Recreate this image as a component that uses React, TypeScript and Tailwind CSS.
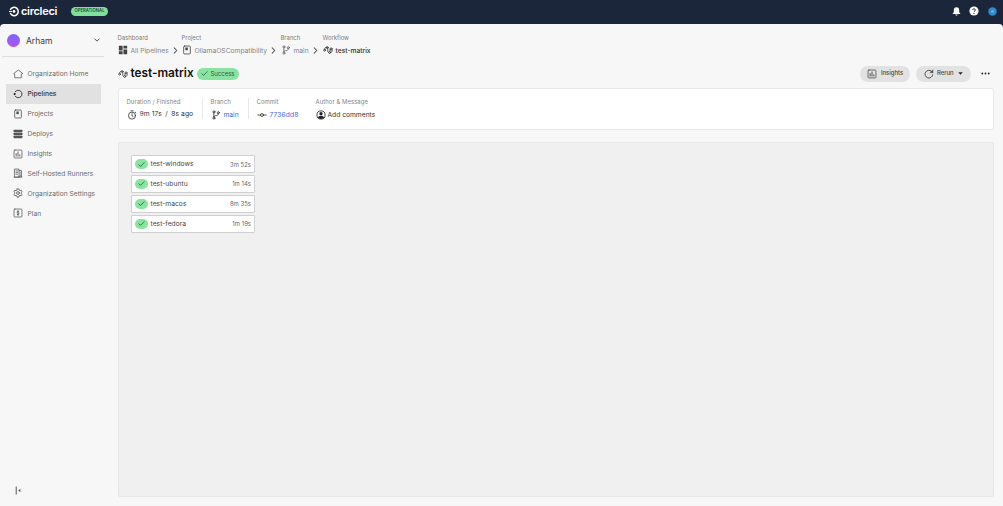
import React from 'react';
import clsx from 'clsx';

type IconProps = { className?: string };

const stroke = {
  fill: 'none',
  stroke: 'currentColor',
  strokeWidth: 1.8,
  strokeLinecap: 'round' as const,
  strokeLinejoin: 'round' as const,
};

function HomeIcon({ className }: IconProps) {
  return (
    <svg viewBox="0 0 24 24" className={className} {...stroke}>
      <path d="M12 3 1.500 11l2.500 1v9h16v-9l2.500-1z" />
    </svg>
  );
}

function PipelinesIcon({ className }: IconProps) {
  return (
    <svg viewBox="0 0 24 24" className={className} {...stroke} strokeWidth={2}>
      <path d="M5 7a9 9 0 1 1 0 10" />
      <circle cx="4" cy="12" r="2.600" fill="currentColor" stroke="none" />
    </svg>
  );
}

function ProjectIcon({ className }: IconProps) {
  return (
    <svg viewBox="0 0 24 24" className={className} {...stroke} strokeWidth={2}>
      <rect x="4" y="2.500" width="16" height="19" rx="2" />
      <rect x="8" y="6" width="6" height="6.500" fill="currentColor" stroke="none" />
    </svg>
  );
}

function DeploysIcon({ className }: IconProps) {
  return (
    <svg viewBox="0 0 24 24" className={className} fill="currentColor">
      <rect x="1.500" y="2" width="21" height="5.500" rx="1" />
      <rect x="1.500" y="9.200" width="21" height="5.500" rx="1" />
      <rect x="1.500" y="16.400" width="21" height="5.500" rx="1" />
    </svg>
  );
}

function InsightsIcon({ className }: IconProps) {
  return (
    <svg viewBox="0 0 24 24" className={className} {...stroke}>
      <rect x="2.500" y="2.500" width="19" height="19" rx="2" />
      <path d="M7.500 11v6M12 7v10M16.500 14v3" strokeWidth={2.2} />
    </svg>
  );
}

function RunnersIcon({ className }: IconProps) {
  return (
    <svg viewBox="0 0 24 24" className={className} {...stroke}>
      <path d="M3.500 21.500v-19h11v19zM14.500 6h6v15.500h-6M2.500 21.500h19" />
      <path d="M7 7h4M7 11h4M7 15h4M17.500 10v1M17.500 14v1M17.500 18v.5" />
    </svg>
  );
}

function GearIcon({ className }: IconProps) {
  return (
    <svg viewBox="0 0 24 24" className={className} {...stroke} strokeWidth={2}>
      <path d="M10 2h4l.7 3 2.200 1.300 3-.9 2 3.400-2.300 2.100v2.200l2.300 2.100-2 3.400-3-.9-2.200 1.300-.7 3h-4l-.7-3-2.200-1.300-3 .9-2-3.400 2.300-2.100v-2.200L2.100 8.800l2-3.400 3 .9L9.300 5z" />
      <circle cx="12" cy="12" r="3.400" />
    </svg>
  );
}

function PlanIcon({ className }: IconProps) {
  return (
    <svg viewBox="0 0 24 24" className={className} {...stroke}>
      <rect x="2.500" y="2.500" width="19" height="19" rx="2" />
      <path d="M14.800 9c-1-1.600-5.300-1.500-5.300.8 0 2.700 5.300 1.600 5.300 4.400 0 2.300-4.600 2.400-5.600.6M12 6v12" />
    </svg>
  );
}

function DashboardIcon({ className }: IconProps) {
  return (
    <svg viewBox="0 0 24 24" className={className} fill="currentColor">
      <path d="M2 2h9v11H2zM13 2h9v6.500h-9zM2 15h9v7H2zM13 10.500h9V22h-9z" />
    </svg>
  );
}

function BranchIcon({ className }: IconProps) {
  return (
    <svg viewBox="0 0 24 24" className={className} {...stroke} strokeWidth={2}>
      <circle cx="7" cy="4.500" r="2.500" />
      <circle cx="7" cy="19.500" r="2.500" />
      <circle cx="17.500" cy="6.500" r="2.500" />
      <path d="M7 7v10M17.500 9c0 4-3 4.500-6 4.500-2.500 0-4.500 1-4.500 3" />
    </svg>
  );
}

function WorkflowIcon({ className }: IconProps) {
  return (
    <svg viewBox="0 0 24 24" className={className} {...stroke} strokeWidth={2}>
      <path d="M4 10.500c0-3.500 1.500-5 4-5M11.500 8v6c0 2.500.5 3.500 2 4M18.500 18.500c2.500-1 3.500-3 3.500-6M17 10v5" />
      <circle cx="10" cy="6" r="2.200" />
      <circle cx="3.800" cy="12.500" r="2.200" />
      <circle cx="19.500" cy="9.500" r="2.400" />
      <circle cx="16" cy="18" r="2.200" />
    </svg>
  );
}

function ChevronIcon({ className }: IconProps) {
  return (
    <svg viewBox="0 0 8 8" className={className} {...stroke} strokeWidth={1.2}>
      <path d="m2.500 1 3 3-3 3" />
    </svg>
  );
}

function CheckIcon({ className }: IconProps) {
  return (
    <svg viewBox="0 0 8 8" className={className} {...stroke} strokeWidth={0.9}>
      <path d="m1 4.300 1.900 1.900L7 1.900" />
    </svg>
  );
}

const navItems = [
  { label: 'Organization Home', icon: HomeIcon },
  { label: 'Pipelines', icon: PipelinesIcon, active: true },
  { label: 'Projects', icon: ProjectIcon },
  { label: 'Deploys', icon: DeploysIcon },
  { label: 'Insights', icon: InsightsIcon },
  { label: 'Self-Hosted Runners', icon: RunnersIcon },
  { label: 'Organization Settings', icon: GearIcon },
  { label: 'Plan', icon: PlanIcon },
];

const crumbs = [
  { title: 'Dashboard', label: 'All Pipelines', icon: DashboardIcon, width: 'w-[64px]', iconColor: 'text-[#444]' },
  { title: 'Project', label: 'OllamaOSCompatibility', icon: ProjectIcon, width: 'w-[99px]', iconColor: 'text-[#444]' },
  { title: 'Branch', label: 'main', icon: BranchIcon, width: 'w-[42px]', iconColor: 'text-[#666]' },
  { title: 'Workflow', label: 'test-matrix', icon: WorkflowIcon, width: 'w-[60px]', iconColor: 'text-[#333]' },
];

const jobs = [
  { name: 'test-windows', time: '3m 52s' },
  { name: 'test-ubuntu', time: '1m 14s' },
  { name: 'test-macos', time: '8m 35s' },
  { name: 'test-fedora', time: '1m 19s' },
];

function TopBar() {
  return (
    <header className="flex h-6 items-center bg-[#1c263b] pb-[2px] pl-[9px] pr-[6px] text-white">
      <svg viewBox="0 0 12 12" className="h-[11px] w-[10px]">
        <path d="M1.500 4a5 5 0 1 1 0 4" fill="none" stroke="white" strokeWidth="1.800" />
        <path d="M0 6h3.500" stroke="white" strokeWidth="1.300" />
        <circle cx="6" cy="6" r="1.700" fill="white" />
      </svg>
      <span className="ml-[2px] w-[37px] text-[11px] font-semibold leading-none tracking-[-0.300px]">circleci</span>
      <span className="ml-[13px] flex h-[9px] w-[37px] items-center justify-center rounded-full bg-[#7fe09b] text-[4.200px] font-semibold tracking-[0.050px] text-[#1d4a37]">
        OPERATIONAL
      </span>
      <div className="ml-auto flex items-center">
        <svg viewBox="0 0 10 10" className="h-[9px] w-[9px]" fill="white">
          <path d="M5 .3c-2 0-3 1.400-3 3.200v2.200L.8 7.300v.6h8.400v-.6L8 5.700V3.500C8 1.700 7 .3 5 .3zM3.800 8.400a1.200 1.200 0 0 0 2.400 0z" />
        </svg>
        <svg viewBox="0 0 10 10" className="ml-[8px] h-[10px] w-[10px]">
          <circle cx="5" cy="5" r="4.600" fill="white" />
          <path d="M3.700 4c0-1.800 2.700-1.700 2.700 0C6.400 5 5 5 5 6" fill="none" stroke="#1c263b" strokeWidth="0.900" />
          <circle cx="5" cy="7.400" r="0.600" fill="#1c263b" />
        </svg>
        <svg viewBox="0 0 10 10" className="ml-[9px] h-[9px] w-[9px]">
          <circle cx="5" cy="5" r="4.700" fill="#2f8bd0" />
          <circle cx="5" cy="5" r="1.500" fill="#6eb6e6" />
        </svg>
      </div>
    </header>
  );
}

function Sidebar() {
  return (
    <aside className="flex w-[106px] shrink-0 flex-col">
      <div className="ml-[2px] mr-[2px] flex h-[33px] items-center border-b border-[#dedede] pl-[5px] pr-[4px]">
        <span className="h-[13px] w-[13px] rounded-full bg-linear-to-b from-[#7668f5] to-[#b54df5]" />
        <span className="ml-[6px] pt-[2px] text-[8.500px] text-[#3c3c3c]">Arham</span>
        <ChevronIcon className="ml-auto h-[6px] w-[6px] rotate-90 text-[#444]" />
      </div>
      <nav className="mt-[7px] pl-[6px] pr-[5px]">
        {navItems.map(({ label, icon: Icon, active }) => (
          <a
            key={label}
            className={clsx(
              'flex h-[19.900px] items-center whitespace-nowrap pl-[6.500px] text-[6.700px]',
              active ? 'bg-[#e1e1e1] text-[#333]' : 'text-[#6c6c6c]',
            )}
          >
            <Icon className={clsx('h-[10px] w-[10px] shrink-0', active ? 'text-[#222]' : 'text-[#555]')} />
            <span className={clsx('ml-[5px] pt-px', active && 'font-medium')}>{label}</span>
          </a>
        ))}
      </nav>
      <svg viewBox="0 0 8 8" className="mb-[11px] ml-[14.500px] mt-auto h-[9px] w-[8px]" fill="#555">
        <path d="M.7 0h1v8h-1zM3.300 4l2-1.800v3.600z" />
      </svg>
    </aside>
  );
}

function Breadcrumbs() {
  return (
    <div className="flex pt-[9px]">
      {crumbs.map(({ title, label, icon: Icon, width, iconColor }, i) => {
        const last = i === crumbs.length - 1;
        return (
          <div key={title} className={clsx('shrink-0 whitespace-nowrap', width)}>
            <div className="h-[9px] text-[5.900px] leading-[9px] text-[#7b7b7b]">{title}</div>
            <div className="mt-[3px] flex h-[10px] items-center">
              <Icon className={clsx('h-[10px] w-[10px] shrink-0', iconColor)} />
              <span className={clsx('ml-[3px] pt-[2px] text-[6.700px]', last ? 'font-medium text-[#333]' : 'text-[#858585]')}>
                {label}
              </span>
              {!last && <ChevronIcon className="ml-[3px] h-[7px] w-[7px] shrink-0 text-[#555]" />}
            </div>
          </div>
        );
      })}
    </div>
  );
}

function TitleRow() {
  return (
    <div className="mt-[10px] flex h-[17px] items-center">
      <WorkflowIcon className="h-[10px] w-[10px] text-[#444]" />
      <h1 className="ml-[3px] w-[63.500px] whitespace-nowrap pt-px text-[11.800px] font-semibold leading-none text-[#111]">
        test-matrix
      </h1>
      <span className="ml-[3px] flex h-[12px] w-[42px] items-center justify-center gap-[2px] rounded-full bg-[#8be3a1] text-[6px] text-[#2a5c43]">
        <CheckIcon className="h-[7px] w-[7px]" />
        <span>Success</span>
      </span>
      <button className="ml-auto flex h-[16px] w-[50px] items-center justify-center gap-[4px] rounded-full bg-[#e2e2e2] text-[5.900px] font-medium text-[#444]">
        <InsightsIcon className="h-[10px] w-[10px]" />
        Insights
      </button>
      <button className="ml-[6px] flex h-[16px] w-[55px] items-center rounded-full bg-[#e2e2e2] pl-[8px] text-[5.900px] font-medium text-[#444]">
        <svg viewBox="0 0 24 24" className="h-[10px] w-[10px]" {...stroke} strokeWidth={2.2}>
          <path d="M21 14A9.300 9.300 0 1 1 18 5.500l2 2" />
          <path d="M21.500 2.500v6.500H15z" fill="currentColor" strokeWidth={1} />
        </svg>
        <span className="ml-[3px]">Rerun</span>
        <svg viewBox="0 0 6 4" className="ml-[4px] h-[3px] w-[5px]" fill="#222">
          <path d="M0 .3h6L3 3.700z" />
        </svg>
      </button>
      <svg viewBox="0 0 9 3" className="ml-[10px] mr-[4px] h-[3px] w-[9px]" fill="#222">
        <circle cx="1.300" cy="1.500" r="0.900" />
        <circle cx="4.500" cy="1.500" r="0.900" />
        <circle cx="7.700" cy="1.500" r="0.900" />
      </svg>
    </div>
  );
}

type FieldProps = { title: string; className?: string; children: React.ReactNode };

function Field({ title, className, children }: FieldProps) {
  return (
    <div className={clsx('h-[21px] shrink-0 whitespace-nowrap', className)}>
      <div className="h-[8px] text-[5.900px] leading-[8px] tracking-[0.080px] text-[#858585]">{title}</div>
      <div className="mt-[3px] flex h-[11px] items-center text-[6.700px] text-[#333]">{children}</div>
    </div>
  );
}

function Summary() {
  return (
    <section className="mt-[6px] flex h-[42px] rounded-[3px] border border-[#e8e8e8] bg-white pl-[8px] pt-[9px]">
      <Field title="Duration / Finished" className="w-[76px] border-r border-[#e8e8e8]">
        <svg viewBox="0 0 24 24" className="h-[10px] w-[10px]" {...stroke} strokeWidth={2}>
          <circle cx="12" cy="13.500" r="8.500" />
          <path d="M12 9v5l2.500 1.500M9.500 2h5M19 5l2 2" />
        </svg>
        <span className="ml-[3px] tracking-[0.100px]">9m 17s</span>
        <span className="mx-[3.500px]">/</span>
        <span className="tracking-[0.100px]">8s ago</span>
      </Field>
      <Field title="Branch" className="w-[46px] border-r border-[#e8e8e8] pl-[8px]">
        <BranchIcon className="h-[10px] w-[10px]" />
        <span className="ml-[3px] pt-px text-[#3d68e0]">main</span>
      </Field>
      <Field title="Commit" className="w-[59px] pl-[8px]">
        <svg viewBox="0 0 24 24" className="h-[10px] w-[10px]" {...stroke} strokeWidth={2}>
          <circle cx="12" cy="12" r="3.500" />
          <path d="M2 12h6.500M15.500 12H22" />
        </svg>
        <span className="ml-[3px] pt-px tracking-[0.100px] text-[#3d68e0]">7736dd8</span>
      </Field>
      <Field title="Author & Message" className="pl-[8px]">
        <svg viewBox="0 0 24 24" className="h-[10px] w-[10px]">
          <circle cx="12" cy="12" r="9.800" fill="none" stroke="#222" strokeWidth="2" />
          <circle cx="12" cy="9" r="4" fill="#222" />
          <path d="M4.500 18c2-4.500 13-4.500 15 0-3.500 4.500-11.500 4.500-15 0z" fill="#222" />
        </svg>
        <span className="ml-[2px] pt-px">Add comments</span>
      </Field>
    </section>
  );
}

function JobGraph() {
  return (
    <section className="mb-[9px] mt-[12px] flex-1 rounded-[2px] border border-[#e6e6e6] bg-[#f0f0f0] pl-[12.500px] pt-[12px]">
      <div className="flex w-[124px] flex-col gap-[1.900px]">
        {jobs.map((job) => (
          <div
            key={job.name}
            className="flex h-[18px] items-center rounded-[1px] border border-[#d0d0d0] bg-white pl-[2.500px] pr-[3px]"
          >
            <span className="flex h-[10px] w-[13px] items-center justify-center rounded-full bg-[#8be3a1] text-[#256043]">
              <CheckIcon className="h-[7px] w-[7px]" />
            </span>
            <span className="ml-[3px] pt-px text-[6.700px] tracking-[0.030px] text-[#444]">{job.name}</span>
            <span className="ml-auto pt-[2px] text-[5.900px] tracking-[0.050px] text-[#666]">{job.time}</span>
          </div>
        ))}
      </div>
    </section>
  );
}

function App() {
  return (
    <div className="flex h-screen flex-col overflow-hidden bg-[#1c263b] font-['Inter',sans-serif]">
      <TopBar />
      <div className="flex min-h-0 flex-1 rounded-t-[4px] bg-[#f7f7f7]">
        <Sidebar />
        <main className="ml-[11.500px] mr-[9px] flex min-w-0 flex-1 flex-col">
          <Breadcrumbs />
          <TitleRow />
          <Summary />
          <JobGraph />
        </main>
      </div>
    </div>
  );
}

export default App;
